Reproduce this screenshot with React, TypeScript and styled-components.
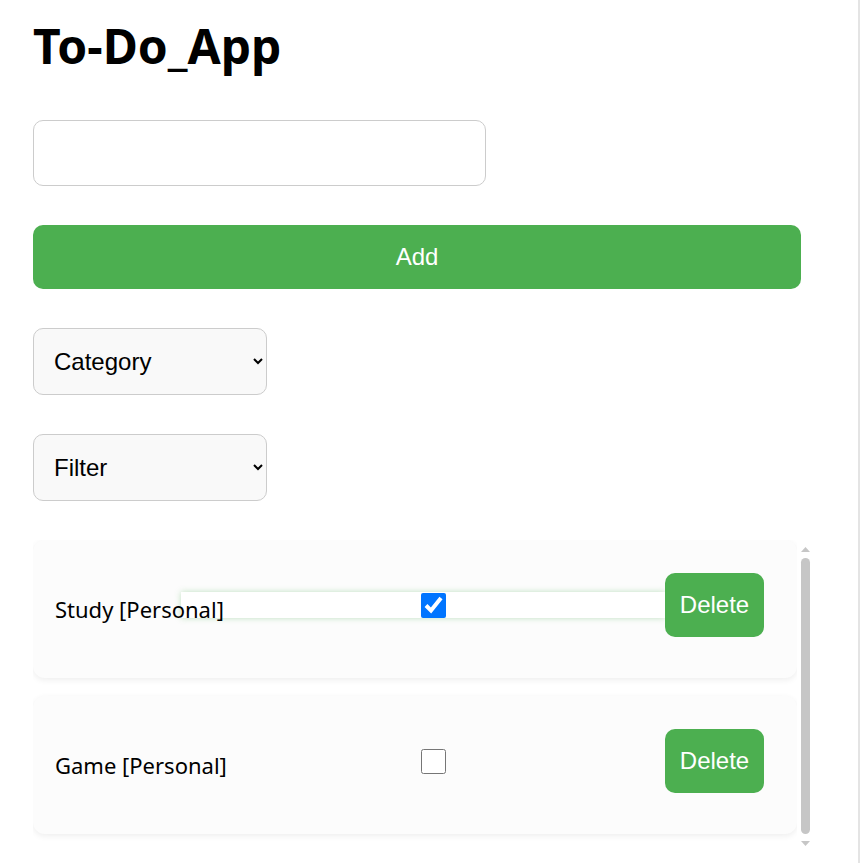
import React, { useState } from "react";
import styled, { createGlobalStyle } from "styled-components";

const GlobalStyle = createGlobalStyle`
  html, body { margin: 0; padding: 0; background: #ffffff; }
  * { box-sizing: border-box; }
`;

const Page = styled.div`
  min-height: 100vh;
  width: 100%;
  border-right: 2px solid #e4e4e4;
  padding: 13px 0 0 33px;
  display: flex;
  flex-direction: column;
  font-family: "Liberation Sans", Arial, sans-serif;
`;

const Title = styled.h1`
  margin: 0 0 41px 0;
  font-family: "Noto Sans", "Open Sans", sans-serif;
  font-size: 48px;
  font-weight: 700;
  line-height: 66px;
  color: #000;
`;

const Stack = styled.div`
  display: flex;
  flex-direction: column;
  align-items: flex-start;
  gap: 39px;
`;

const TaskInput = styled.input`
  width: 453px;
  height: 66px;
  border: 1px solid #cccccc;
  border-radius: 10px;
  background: #ffffff;
  padding: 0 20px;
  font-family: "Liberation Sans", Arial, sans-serif;
  font-size: 24px;
  outline: none;
`;

const AddButton = styled.button`
  width: 768px;
  height: 64px;
  border: none;
  border-radius: 10px;
  background: #4caf50;
  color: #ffffff;
  font-family: "Liberation Sans", Arial, sans-serif;
  font-size: 24px;
  cursor: pointer;
`;

const Select = styled.select`
  width: 234px;
  height: 67px;
  border: 1px solid #cccccc;
  border-radius: 10px;
  background: #f9f9f9;
  padding: 0 8px 0 16px;
  font-family: "Liberation Sans", Arial, sans-serif;
  font-size: 24px;
  color: #000;
`;

const ListBox = styled.div`
  display: flex;
  width: 779px;
  height: 310px;
`;

const Cards = styled.ul`
  margin: 0;
  padding: 0;
  list-style: none;
  width: 764px;
  height: 100%;
  overflow: hidden;
`;

const ScrollBar = styled.div`
  width: 15px;
  height: 100%;
  padding: 7px 0 4px 1px;
  display: flex;
  flex-direction: column;
  align-items: center;
`;

const Arrow = styled.svg`
  flex: none;
  display: block;
`;

const Thumb = styled.div`
  flex: 1;
  width: 9px;
  margin: 6px 0 7px;
  border-radius: 5px;
  background: #c6c6c6;
`;

const Card = styled.li`
  width: 764px;
  height: 138px;
  margin-bottom: 18px;
  padding: 0 35px 0 22px;
  display: flex;
  align-items: center;
  background: #fcfcfc;
  border-radius: 12px;
  box-shadow: 0 2px 6px rgba(0, 0, 0, 0.07);
`;

const Label = styled.span`
  flex: none;
  width: 126px;
  white-space: nowrap;
  z-index: 1;
  font-family: "Noto Sans", "Open Sans", sans-serif;
  font-size: 22px;
  color: #000;
`;

const CheckCell = styled.label<{ $focused: boolean }>`
  flex: none;
  width: 484px;
  height: 26px;
  margin-bottom: 8px;
  padding-left: 20px;
  display: flex;
  align-items: center;
  justify-content: center;
  background: ${(p) => (p.$focused ? "#ffffff" : "transparent")};
  box-shadow: ${(p) => (p.$focused ? "0 0 6px rgba(76, 175, 80, 0.35)" : "none")};
`;

const Check = styled.input`
  width: 25px;
  height: 25px;
  margin: 0;
`;

const DeleteButton = styled.button`
  flex: none;
  margin-left: auto;
  margin-bottom: 9px;
  width: 99px;
  height: 64px;
  border: none;
  border-radius: 10px;
  background: #4caf50;
  color: #ffffff;
  font-family: "Liberation Sans", Arial, sans-serif;
  font-size: 24px;
  cursor: pointer;
`;

type Task = { id: number; text: string; category: string; done: boolean };

export default function App() {
  const [tasks, setTasks] = useState<Task[]>([
    { id: 1, text: "Study", category: "Personal", done: true },
    { id: 2, text: "Game", category: "Personal", done: false },
  ]);
  const [focusedId] = useState<number>(1);

  const toggle = (id: number) =>
    setTasks((ts) => ts.map((t) => (t.id === id ? { ...t, done: !t.done } : t)));
  const remove = (id: number) => setTasks((ts) => ts.filter((t) => t.id !== id));

  return (
    <>
      <GlobalStyle />
      <Page>
        <Title>To-Do_App</Title>
        <Stack>
          <TaskInput type="text" />
          <AddButton>Add</AddButton>
          <Select defaultValue="">
            <option value="">Category</option>
            <option value="Personal">Personal</option>
            <option value="Work">Work</option>
          </Select>
          <Select defaultValue="">
            <option value="">Filter</option>
            <option value="all">All</option>
            <option value="done">Completed</option>
          </Select>
          <ListBox>
            <Cards>
              {tasks.map((t) => (
                <Card key={t.id}>
                  <Label>
                    {t.text} [{t.category}]
                  </Label>
                  <CheckCell $focused={t.id === focusedId}>
                    <Check type="checkbox" checked={t.done} onChange={() => toggle(t.id)} />
                  </CheckCell>
                  <DeleteButton onClick={() => remove(t.id)}>Delete</DeleteButton>
                </Card>
              ))}
            </Cards>
            <ScrollBar>
              <Arrow width="9" height="5" viewBox="0 0 9 5">
                <polygon points="4.5,0 9,5 0,5" fill="#c6c6c6" />
              </Arrow>
              <Thumb />
              <Arrow width="9" height="5" viewBox="0 0 9 5">
                <polygon points="0,0 9,0 4.5,5" fill="#c6c6c6" />
              </Arrow>
            </ScrollBar>
          </ListBox>
        </Stack>
      </Page>
    </>
  );
}
